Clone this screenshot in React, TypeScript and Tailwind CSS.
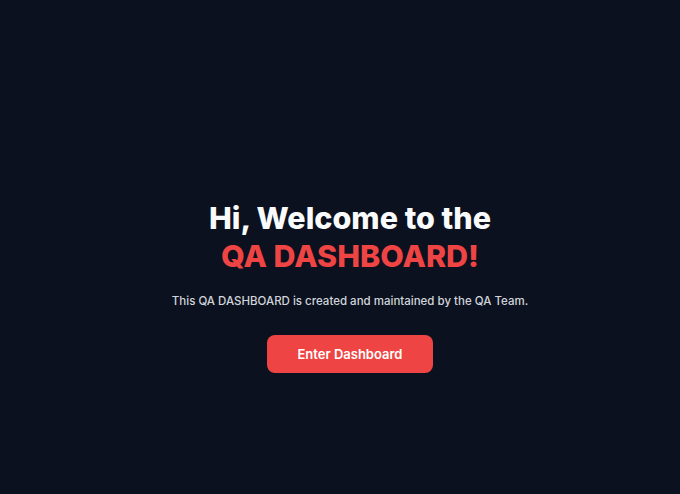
export default function App() {
  return (
    <div
      className="flex min-h-screen flex-col items-center bg-[#0b111e] pl-8 pr-3 pt-[199px] text-center"
      style={{ fontFamily: "Inter, 'Noto Sans', sans-serif" }}
    >
      <h1 className="text-[30.5px] font-extrabold leading-[38px] text-gray-50">
        Hi, Welcome to the
        <br />
        <span className="text-[#ef4444]">QA DASHBOARD!</span>
      </h1>
      <p className="mt-[17px] text-[11.5px] font-medium leading-[18px] text-[#d1d5db]">
        This QA DASHBOARD is created and maintained by the QA Team.
      </p>
      <button className="mt-[25px] rounded-lg bg-[#ef4444] px-[31px] py-[10px] text-[13px] font-semibold leading-[18px] text-white hover:bg-red-600">
        Enter Dashboard
      </button>
    </div>
  );
}
